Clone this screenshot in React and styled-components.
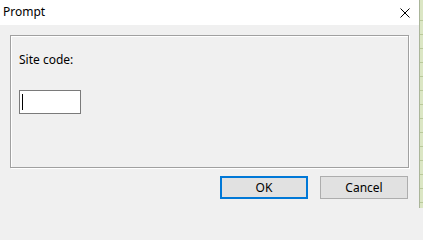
import React from 'react'
import styled, { createGlobalStyle } from 'styled-components'

const GlobalStyle = createGlobalStyle`
    html, body {
        margin: 0;
        padding: 0;
        background: #f0f0f0;
    }
    body {
        font-family: "Noto Sans", "Open Sans", "Liberation Sans", sans-serif;
        font-size: 12px;
        color: #000;
    }
`;

const Screen = styled.div`
    display: flex;
    width: 423px;
    height: 208px;
    overflow: hidden;
`;

const Dialog = styled.div`
    width: 419px;
    height: 208px;
    background: #f0f0f0;
    border-right: 1px solid #aab59a;
    display: flex;
    flex-direction: column;
`;

// sheet behind the dialog, a sliver of it shows at the right edge
const BehindSheet = styled.div`
    flex: 1;
    background-color: #dbe6c4;
    background-image: repeating-linear-gradient(
        to bottom,
        transparent 0,
        transparent 13px,
        #b9c99a 13px,
        #b9c99a 14px
    );
    background-position: 0 7px;
`;

const TitleBar = styled.div`
    height: 25px;
    flex: none;
    background: #fff;
    display: flex;
    align-items: center;
    padding: 0 9px 0 3px;
`;

const Title = styled.span`
    font-size: 12px;
    line-height: 16px;
    margin-top: -1px;
    flex: 1;
`;

const CloseButton = styled.button`
    border: none;
    background: none;
    padding: 0;
    width: 10px;
    height: 10px;
    display: flex;
    margin-top: 1px;
`;

const GroupBox = styled.div`
    margin: 10px 0 0 10px;
    width: 397px;
    height: 131px;
    flex: none;
    border: 1px solid #a0a0a0;
    box-shadow: inset 1px 1px 0 #fff, 1px 1px 0 #fff;
    padding: 16px 9px 0;
    box-sizing: border-box;
    width: 399px;
    height: 133px;
    display: flex;
    flex-direction: column;
    align-items: flex-start;
`;

const Label = styled.label`
    font-size: 12px;
    line-height: 16px;
    margin-left: -1px;
`;

const TextBox = styled.div`
    margin-top: 22px;
    width: 58px;
    height: 22px;
    border: 1px solid #7a7a7a;
    background: #fff;
    display: flex;
    align-items: center;
    padding-left: 2px;
    box-sizing: content-box;
    margin-left: -1px;
`;

const Caret = styled.span`
    width: 1px;
    height: 16px;
    background: #000;
`;

const Footer = styled.div`
    display: flex;
    justify-content: flex-end;
    gap: 12px;
    margin: 8px 11px 0 0;
`;

const Button = styled.button`
    width: 88px;
    height: 23px;
    box-sizing: border-box;
    background: #e1e1e1;
    border: ${p => (p.$default ? '2px solid #0078d7' : '1px solid #adadad')};
    font-family: inherit;
    font-size: 12px;
    color: #000;
    padding: 0;
    line-height: 16px;
`;

const CloseIcon = () => (
    <svg width="10" height="10" viewBox="0 0 10 10">
        <path d="M0.5 0.5 L9.5 9.5 M9.5 0.5 L0.5 9.5" stroke="#000" strokeWidth="1" fill="none" />
    </svg>
);

const App = () => {
    return (
        <Screen>
            <GlobalStyle />
            <Dialog>
                <TitleBar>
                    <Title>Prompt</Title>
                    <CloseButton aria-label="Close">
                        <CloseIcon />
                    </CloseButton>
                </TitleBar>
                <GroupBox>
                    <Label>Site code:</Label>
                    <TextBox role="textbox">
                        <Caret />
                    </TextBox>
                </GroupBox>
                <Footer>
                    <Button $default>OK</Button>
                    <Button>Cancel</Button>
                </Footer>
            </Dialog>
            <BehindSheet />
        </Screen>
    )
};

export default App;
